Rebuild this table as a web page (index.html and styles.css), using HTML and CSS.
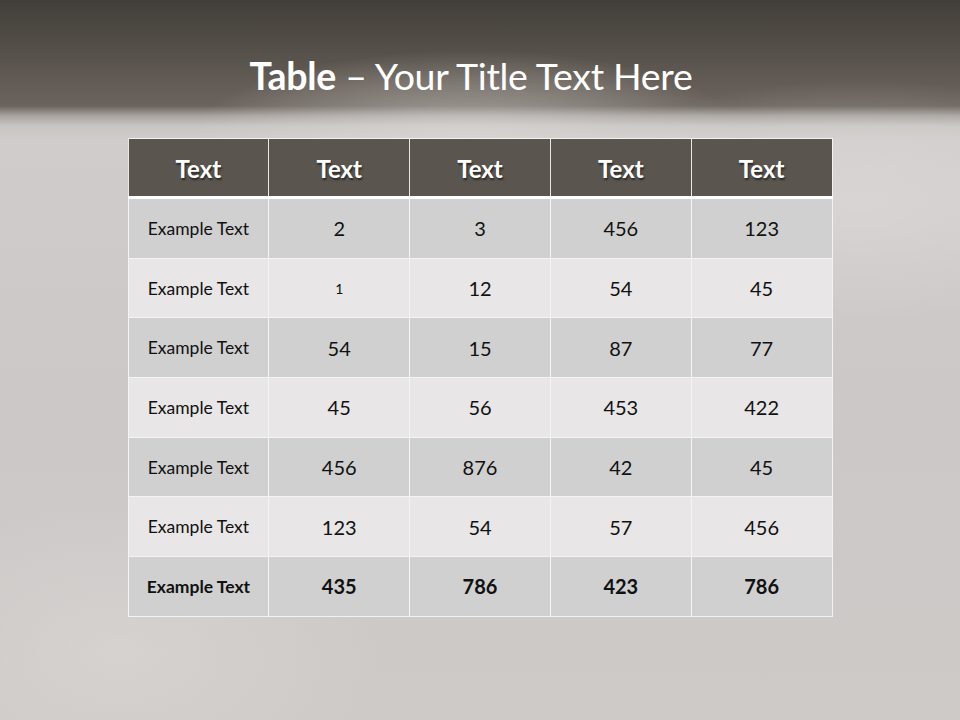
FILE: index.html
```html
<!DOCTYPE html>
<html>
<head>
<meta charset="utf-8">
<link rel="stylesheet" href="styles.css">
</head>
<body>
<div class="slide">
  <h1 class="title"><b>Table</b> – Your Title Text Here</h1>
  <table class="grid">
    <thead>
      <tr><th>Text</th><th>Text</th><th>Text</th><th>Text</th><th>Text</th></tr>
    </thead>
    <tbody>
      <tr class="odd"><td class="lbl">Example Text</td><td>2</td><td>3</td><td>456</td><td>123</td></tr>
      <tr class="even"><td class="lbl">Example Text</td><td class="small">1</td><td>12</td><td>54</td><td>45</td></tr>
      <tr class="odd"><td class="lbl">Example Text</td><td>54</td><td>15</td><td>87</td><td>77</td></tr>
      <tr class="even"><td class="lbl">Example Text</td><td>45</td><td>56</td><td>453</td><td>422</td></tr>
      <tr class="odd"><td class="lbl">Example Text</td><td>456</td><td>876</td><td>42</td><td>45</td></tr>
      <tr class="even"><td class="lbl">Example Text</td><td>123</td><td>54</td><td>57</td><td>456</td></tr>
      <tr class="odd total"><td class="lbl">Example Text</td><td>435</td><td>786</td><td>423</td><td>786</td></tr>
    </tbody>
  </table>
</div>
</body>
</html>
```
FILE: styles.css
```css
html, body {
  margin: 0;
  padding: 0;
}
body {
  width: 960px;
  height: 720px;
  overflow: hidden;
  font-family: "Lato", "Open Sans", sans-serif;
}
.slide {
  width: 960px;
  height: 720px;
  display: flex;
  flex-direction: column;
  align-items: center;
  background:
    radial-gradient(ellipse 300px 120px at 860px 200px, rgba(225,222,221,0.5), rgba(225,222,221,0) 100%),
    radial-gradient(ellipse 260px 160px at 120px 650px, rgba(222,218,216,0.5), rgba(222,218,216,0) 100%),
    radial-gradient(ellipse 280px 90px at 470px 140px, rgba(220,216,214,0.6), rgba(220,216,214,0) 100%),
    linear-gradient(to bottom, #423e39 0px, #514c46 40px, #625b55 80px, #6b645e 106px, #a9a4a0 116px, #c8c5c3 126px, #cfcccb 140px, #cbc8c7 400px, #cdcac8 720px);
}
.title {
  margin: 52px 0 0;
  padding-right: 18px;
  height: 48px;
  line-height: 48px;
  font-size: 37.5px;
  font-weight: 400;
  color: #ffffff;
  letter-spacing: -0.3px;
}
.title b {
  font-weight: 700;
}
.grid {
  margin-top: 38px;
  width: 705px;
  border-collapse: collapse;
  table-layout: fixed;
  border: 1px solid #f2f2f2;
}
.grid th {
  height: 55px;
  padding: 2px 0 0;
  background: #5a554f;
  color: #ffffff;
  font-size: 24px;
  font-weight: 700;
  text-shadow: 1px 2px 2px rgba(0,0,0,0.55);
  border-left: 1px solid #e8e8e8;
  border-bottom: 3px solid #ffffff;
  text-align: center;
}
.grid td {
  height: 58.7px;
  padding: 0;
  text-align: center;
  color: #111111;
  font-size: 20px;
  border-left: 1px solid #f4f4f4;
  border-top: 1px solid #f4f4f4;
}
.grid td.lbl {
  font-size: 17.5px;
}
.grid td.small {
  font-size: 14px;
}
.grid tr.odd td {
  background: #d0d0d0;
}
.grid tr.even td {
  background: #e8e6e6;
}
.grid tr.total td {
  font-weight: 700;
}
```
